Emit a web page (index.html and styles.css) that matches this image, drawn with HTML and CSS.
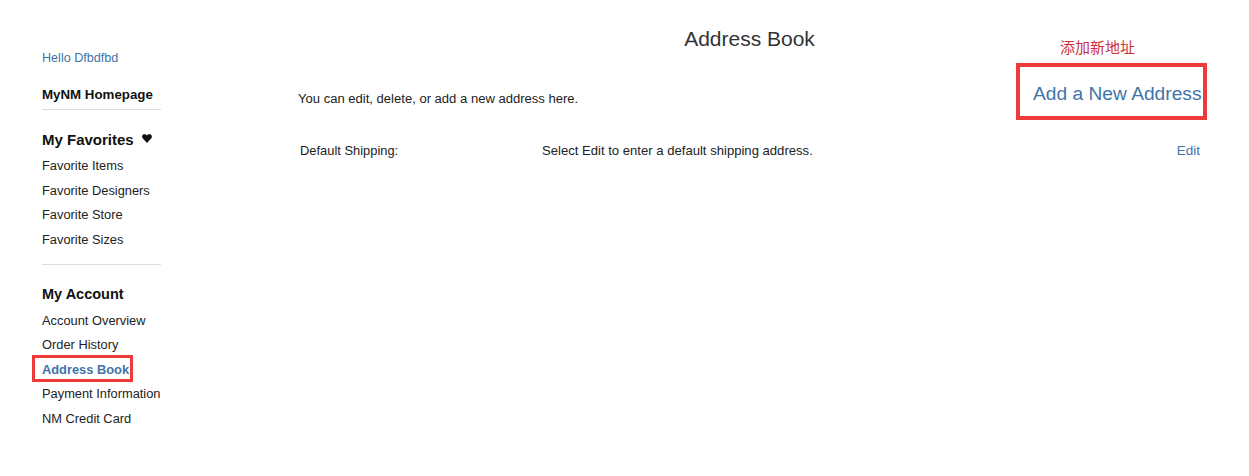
FILE: index.html
```html
<!DOCTYPE html>
<html lang="en">
<head>
<meta charset="utf-8">
<title>Address Book</title>
<link rel="stylesheet" href="styles.css">
</head>
<body>
<div class="page">
  <aside class="sidebar">
    <a class="hello" href="#">Hello Dfbdfbd</a>
    <div class="homepage">MyNM Homepage</div>
    <section class="group favorites">
      <h3 class="group-title">My Favorites <svg class="heart" viewBox="0 0 10 9" width="10" height="9"><path d="M5 9 L0.9 4.6 C-0.4 3.1 0 0.9 1.8 0.3 C3.1 -0.1 4.3 0.4 5 1.6 C5.7 0.4 6.9 -0.1 8.2 0.3 C10 0.9 10.4 3.1 9.1 4.6 Z"/></svg></h3>
      <a class="item" href="#">Favorite Items</a>
      <a class="item" href="#">Favorite Designers</a>
      <a class="item" href="#">Favorite Store</a>
      <a class="item" href="#">Favorite Sizes</a>
    </section>
    <section class="group account">
      <h3 class="group-title">My Account</h3>
      <a class="item" href="#">Account Overview</a>
      <a class="item" href="#">Order History</a>
      <a class="item current" href="#">Address Book</a>
      <a class="item" href="#">Payment Information</a>
      <a class="item" href="#">NM Credit Card</a>
    </section>
  </aside>
  <main class="main">
    <h1 class="title">Address Book</h1>
    <div class="intro-row">
      <p class="intro">You can edit, delete, or add a new address here.</p>
      <div class="add-wrap">
        <span class="note">添加新地址</span>
        <a class="add" href="#">Add a New Address</a>
      </div>
    </div>
    <div class="ship-row">
      <span class="ship-label">Default Shipping:</span>
      <span class="ship-text">Select Edit to enter a default shipping address.</span>
      <a class="edit" href="#">Edit</a>
    </div>
  </main>
</div>
</body>
</html>
```
FILE: styles.css
```css
html, body { margin: 0; padding: 0; background: #fff; }
body { font-family: "Liberation Sans", Arial, sans-serif; font-size: 13px; color: #222; }
a { text-decoration: none; color: inherit; }
.page { display: flex; width: 1249px; height: 476px; overflow: hidden; box-sizing: border-box; padding-left: 42px; }
.sidebar { width: 119px; flex: none; padding-top: 50px; display: flex; flex-direction: column; }
.hello { color: #3f74a8; line-height: 16px; font-size: 12.6px; }
.homepage { margin-top: 21px; font-size: 13.3px; font-weight: bold; color: #111; line-height: 16px; padding-bottom: 6px; border-bottom: 1px solid #ddd; }
.group { display: flex; flex-direction: column; }
.favorites { margin-top: 21px; padding-bottom: 8px; border-bottom: 1px solid #ddd; }
.account { margin-top: 21px; }
.group-title { margin: 0 0 10px; font-size: 15px; line-height: 17px; font-weight: bold; color: #111; }
.account .group-title { font-size: 14.5px; margin-bottom: 9.6px; }
.heart { margin-left: 4px; position: relative; top: -2px; fill: #111; }
.item { font-size: 12.85px; line-height: 16px; margin-bottom: 8.5px; white-space: nowrap; color: #222; }
.item.current { color: #3f74a8; font-weight: bold; outline: 3px solid #ee3a3a; align-self: flex-start; padding: 3.5px 1px 1.5px 7px; margin: -3.5px 0 7px -7px; }
.main { margin-left: 137px; width: 909px; flex: none; display: flex; flex-direction: column; }
.title { margin: 26px 0 0; font-size: 21px; font-weight: normal; line-height: 26px; text-align: center; color: #333; padding-right: 6px; }
.intro-row { display: flex; justify-content: space-between; align-items: flex-start; }
.intro { margin: 39px 0 0; line-height: 16px; font-size: 13.05px; color: #222; }
.add-wrap { position: relative; margin-top: 11px; }
.note { position: absolute; top: -26px; left: 44px; color: #c9323c; white-space: nowrap; font-family: "Noto Sans CJK SC", sans-serif; font-size: 15px; line-height: 20px; }
.add { display: block; border: 4px solid #ee3a3a; width: 170px; height: 49px; color: #3f74a8; font-size: 19.2px; line-height: 54px; padding-left: 13px; white-space: nowrap; overflow: hidden; }
.ship-row { display: flex; margin-top: 23px; line-height: 16px; padding-left: 2px; padding-right: 7px; }
.ship-label { width: 242px; flex: none; font-size: 12.9px; }
.ship-text { flex: 1; font-size: 13.1px; }
.edit { color: #3f74a8; font-size: 13.5px; }
```
